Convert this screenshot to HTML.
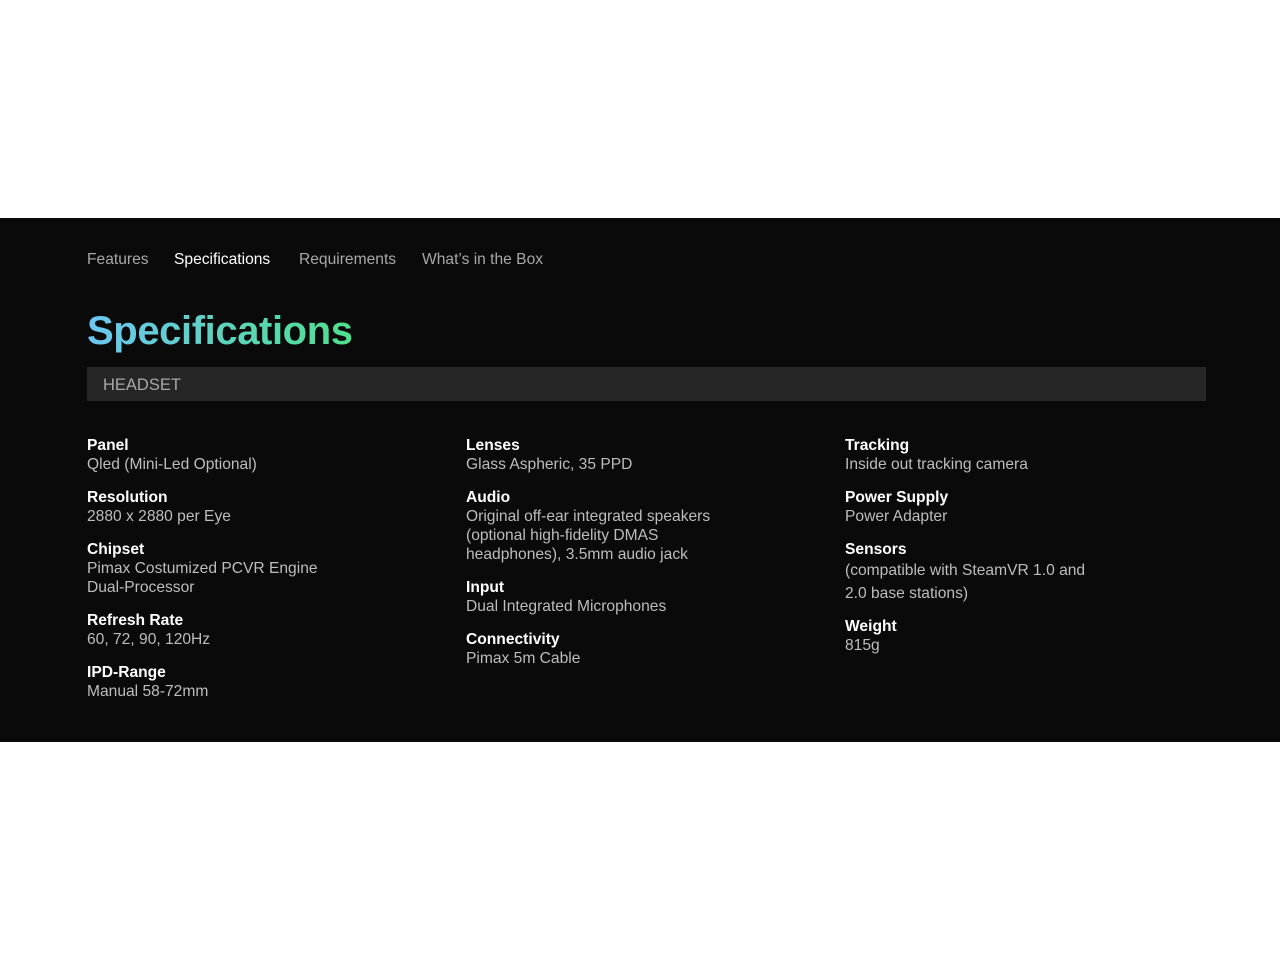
<!DOCTYPE html>
<html><head><style>
body{margin:0;background:#fff;font-family:"Liberation Sans",sans-serif;}
.sec{position:absolute;left:0;top:218px;width:1280px;height:524px;background:#0a0a0a;}
.nav{position:absolute;top:251px;left:87px;font-size:15.6px;color:#a8a8a8;white-space:nowrap}
.nav span{position:absolute;top:0}
h1{position:absolute;left:87px;top:306px;margin:0;font-size:40px;font-weight:bold;line-height:50px;background:linear-gradient(90deg,#6cc6f2,#4fe08c);-webkit-background-clip:text;background-clip:text;color:transparent;letter-spacing:-0.4px}
.bar{position:absolute;left:87px;top:367px;width:1119px;height:34px;background:#262626;color:#a8a8a8;font-size:16.5px;line-height:36px;box-sizing:border-box;padding-left:16px}
.col{position:absolute;top:436px;font-size:15.6px;line-height:19px;color:#bdbdbd}
.col b{color:#fff;display:block}
.col div{margin-bottom:14px}
</style></head><body>
<div class="sec"></div>
<div class="nav"><span style="left:0">Features</span><span style="left:87px;color:#fff">Specifications</span><span style="left:212px">Requirements</span><span style="left:335px">What’s in the Box</span></div>
<h1>Specifications</h1>
<div class="bar">HEADSET</div>
<div class="col" style="left:87px">
<div><b>Panel</b>Qled (Mini-Led Optional)</div>
<div><b>Resolution</b>2880 x 2880 per Eye</div>
<div><b>Chipset</b>Pimax Costumized PCVR Engine<br>Dual-Processor</div>
<div><b>Refresh Rate</b>60, 72, 90, 120Hz</div>
<div><b>IPD-Range</b>Manual 58-72mm</div>
</div>
<div class="col" style="left:466px">
<div><b>Lenses</b>Glass Aspheric, 35 PPD</div>
<div><b>Audio</b>Original off-ear integrated speakers<br>(optional high-fidelity DMAS<br>headphones), 3.5mm audio jack</div>
<div><b>Input</b>Dual Integrated Microphones</div>
<div><b>Connectivity</b>Pimax 5m Cable</div>
</div>
<div class="col" style="left:845px">
<div><b>Tracking</b>Inside out tracking camera</div>
<div><b>Power Supply</b>Power Adapter</div>
<div style="margin-bottom:12px"><b>Sensors</b><span style="line-height:23px">(compatible with SteamVR 1.0 and<br>2.0 base stations)</span></div>
<div><b>Weight</b>815g</div>
</div>
</body></html>
